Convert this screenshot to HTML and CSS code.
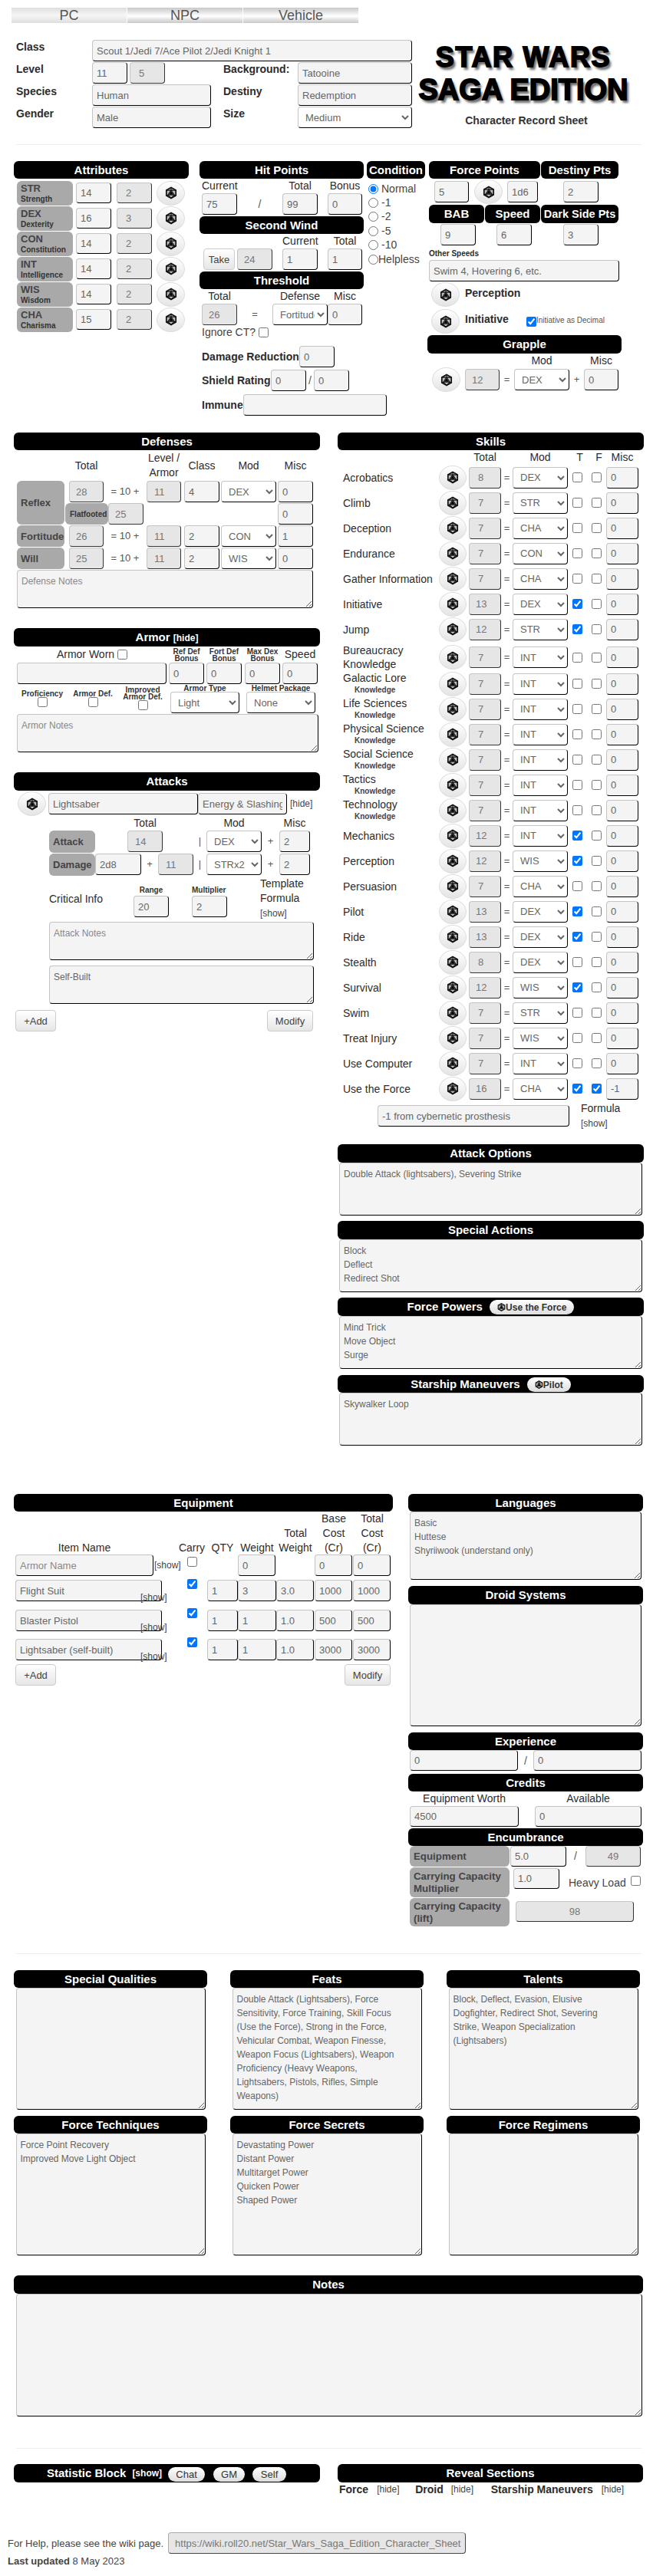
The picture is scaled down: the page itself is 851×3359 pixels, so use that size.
FILE: index.html
```html
<!DOCTYPE html>
<html lang="en">
<head>
<meta charset="utf-8">
<title>Star Wars Saga Edition Character Sheet</title>
<link rel="stylesheet" href="styles.css">
</head>
<body>
<svg class="defs" aria-hidden="true"><symbol id="d20" viewBox="0 0 16 16"><path d="M8 1 14.2 4.4V11.6L8 15 1.8 11.6V4.4Z" fill="#bbb" stroke="#111" stroke-width="1.7"/><path d="M8 1.5V4.5L3.8 10.8 8 15 12.2 10.8 8 4.5M2 4.6 8 4.5 14 4.6M2 11.5 3.8 10.8H12.2L14 11.5" fill="none" stroke="#111" stroke-width="1.1"/><path d="M8 5.6 11 10.2H5Z" fill="#000"/></symbol></svg>

<div class="tabs"><div class="tab on">PC</div><div class="tab">NPC</div><div class="tab">Vehicle</div></div>

<div class="head">
  <div class="idgrid">
    <b class="lb">Class</b><input class="f span4" value="Scout 1/Jedi 7/Ace Pilot 2/Jedi Knight 1">
    <b class="lb">Level</b><div class="lvl"><input class="f" value="11"><input class="f d d1" value="5" disabled></div><span></span><b class="lb">Background:</b><input class="f" value="Tatooine">
    <b class="lb">Species</b><input class="f" value="Human"><span></span><b class="lb">Destiny</b><input class="f" value="Redemption">
    <b class="lb">Gender</b><input class="f" value="Male"><span></span><b class="lb">Size</b><select class="s"><option>Medium</option></select>
  </div>
  <div class="logo"><div class="l1">STAR WARS</div><div class="l2">SAGA EDITION</div><b class="l3">Character Record Sheet</b></div>
</div>
<div class="rule r1"></div>

<div class="main1">
  <section class="attrs">
    <h2 class="hd">Attributes</h2>
    <div class="at"><div class="cell"><b>STR</b><small>Strength</small></div><input class="f h27" value="14"><input class="f h27 d d1" value="2" disabled><button class="roll"><svg><use href="#d20"/></svg></button></div>
    <div class="at"><div class="cell"><b>DEX</b><small>Dexterity</small></div><input class="f h27" value="16"><input class="f h27 d d1" value="3" disabled><button class="roll"><svg><use href="#d20"/></svg></button></div>
    <div class="at"><div class="cell"><b>CON</b><small>Constitution</small></div><input class="f h27" value="14"><input class="f h27 d d1" value="2" disabled><button class="roll"><svg><use href="#d20"/></svg></button></div>
    <div class="at"><div class="cell"><b>INT</b><small>Intelligence</small></div><input class="f h27" value="14"><input class="f h27 d d1" value="2" disabled><button class="roll"><svg><use href="#d20"/></svg></button></div>
    <div class="at"><div class="cell"><b>WIS</b><small>Wisdom</small></div><input class="f h27" value="14"><input class="f h27 d d1" value="2" disabled><button class="roll"><svg><use href="#d20"/></svg></button></div>
    <div class="at"><div class="cell"><b>CHA</b><small>Charisma</small></div><input class="f h27" value="15"><input class="f h27 d d1" value="2" disabled><button class="roll"><svg><use href="#d20"/></svg></button></div>
  </section>

  <section class="hp">
    <h2 class="hd">Hit Points</h2>
    <div class="hg cap"><span class="left">Current</span><span></span><span>Total</span><span></span><span>Bonus</span></div>
    <div class="hg"><input class="f" value="75"><i class="sl">/</i><input class="f" value="99"><span></span><input class="f" value="0"></div>
    <h2 class="hd gap2">Second Wind</h2>
    <div class="hg cap"><span></span><span></span><span>Current</span><span></span><span>Total</span></div>
    <div class="sw"><button class="btn take">Take</button><input class="f d" value="24" disabled><input class="f" value="1"><input class="f" value="1"></div>
    <h2 class="hd gap2">Threshold</h2>
    <div class="th cap"><span>Total</span><span></span><span>Defense</span><span>Misc</span></div>
    <div class="th"><input class="f d" value="26" disabled><span class="eq">=</span><select class="s"><option>Fortitude</option></select><input class="f" value="0"></div>
    <div class="ign">Ignore CT? <input type="checkbox"></div>
    <div class="pr dr"><b>Damage Reduction</b><input class="f w46" value="0"></div>
    <div class="pr shr"><b>Shield Rating</b><input class="f w46" value="0"><i class="sl2">/</i><input class="f w46" value="0"></div>
    <div class="pr imm"><b>Immune</b><input class="f w187"></div>
  </section>

  <section class="cond">
    <h2 class="hd">Condition</h2>
    <div class="radios">
      <label><input type="radio" name="c" checked>Normal</label>
      <label><input type="radio" name="c">-1</label>
      <label><input type="radio" name="c">-2</label>
      <label><input type="radio" name="c">-5</label>
      <label><input type="radio" name="c">-10</label>
      <label class="tight"><input type="radio" name="c">Helpless</label>
    </div>
  </section>

  <section class="rt">
    <div class="fp"><h2 class="hd">Force Points</h2><h2 class="hd">Destiny Pts</h2></div>
    <div class="fr"><input class="f" value="5"><button class="roll"><svg><use href="#d20"/></svg></button><input class="f" value="1d6"><input class="f" value="2"></div>
    <div class="bb"><h2 class="hd h24">BAB</h2><h2 class="hd h24">Speed</h2><h2 class="hd h24 tiny">Dark Side Pts</h2></div>
    <div class="br"><input class="f" value="9"><input class="f" value="6"><input class="f" value="3"></div>
    <b class="oth">Other Speeds</b>
    <input class="f" value="Swim 4, Hovering 6, etc.">
    <div class="rl"><button class="roll"><svg><use href="#d20"/></svg></button><b>Perception</b></div>
    <div class="rl second"><button class="roll"><svg><use href="#d20"/></svg></button><b>Initiative</b><input class="dec" type="checkbox" checked><span class="sm">Initiative as Decimal</span></div>
    <h2 class="hd h24 grap">Grapple</h2>
    <div class="gr cap"><span></span><span></span><span></span><span>Mod</span><span></span><span>Misc</span></div>
    <div class="gr row"><button class="roll"><svg><use href="#d20"/></svg></button><input class="f d" value="12" disabled><span class="eq">=</span><select class="s"><option>DEX</option></select><span class="eq">+</span><input class="f" value="0"></div>
  </section>
</div>

<div class="main2">
  <div class="col">
    <h2 class="hd">Defenses</h2>
    <div class="dg dcap"><span></span><span>Total</span><span></span><span>Level /<br>Armor</span><span class="end">Class</span><span class="end2">Mod</span><span class="end3">Misc</span></div>
    <div class="dg">
      <div class="cell big span2r"><b>Reflex</b></div><input class="f d" value="28" disabled><span class="eq">= 10 +</span><input class="f d d2" value="11" disabled><input class="f w46 je" value="4"><select class="s w72 je"><option>DEX</option></select><input class="f w46 je" value="0">
      <div class="ff"><b class="cell flat">Flatfooted</b><input class="f d w46" value="25" disabled></div><input class="f w46 je c7" value="0">
      <div class="cell big"><b>Fortitude</b></div><input class="f d" value="26" disabled><span class="eq">= 10 +</span><input class="f d d2" value="11" disabled><input class="f w46 je" value="2"><select class="s w72 je"><option>CON</option></select><input class="f w46 je" value="1">
      <div class="cell big"><b>Will</b></div><input class="f d" value="25" disabled><span class="eq">= 10 +</span><input class="f d d2" value="11" disabled><input class="f w46 je" value="2"><select class="s w72 je"><option>WIS</option></select><input class="f w46 je" value="0">
    </div>
    <textarea class="t defn" placeholder="Defense Notes"></textarea>

    <h2 class="hd h24 armor">Armor <span class="hl">[hide]</span></h2>
    <div class="ac acap"><span class="worn">Armor Worn <input type="checkbox"></span><b class="sml">Ref Def<br>Bonus</b><b class="sml">Fort Def<br>Bonus</b><b class="sml">Max Dex<br>Bonus</b><span class="speed">Speed</span></div>
    <div class="ac"><input class="f"><input class="f" value="0"><input class="f" value="0"><input class="f" value="0"><input class="f" value="0"></div>
    <div class="ar2">
      <div class="ck pt8"><b class="sml">Proficiency</b><input type="checkbox"></div>
      <div class="ck pt8"><b class="sml">Armor Def.</b><input type="checkbox"></div>
      <div class="ck pt3"><b class="sml">Improved<br>Armor Def.</b><input type="checkbox"></div>
      <div class="ck pt1"><b class="sml">Armor Type</b><select class="s w90"><option>Light</option></select></div>
      <div class="ck pt1"><b class="sml">Helmet Package</b><select class="s w90"><option>None</option></select></div>
    </div>
    <textarea class="t armn" placeholder="Armor Notes"></textarea>

    <h2 class="hd h24 armor">Attacks</h2>
    <div class="a1"><button class="roll"><svg><use href="#d20"/></svg></button><input class="f w195" value="Lightsaber"><input class="f w116" value="Energy &amp; Slashing"><span class="hide">[hide]</span></div>
    <div class="ag cap"><span></span><span></span><span>Total</span><span></span><span></span><span>Mod</span><span></span><span>Misc</span></div>
    <div class="ag r"><div class="cell big"><b>Attack</b></div><span></span><input class="f d d3" value="14" disabled><span></span><span class="eq bar">|</span><select class="s"><option>DEX</option></select><span class="eq">+</span><input class="f" value="2"></div>
    <div class="dm r"><div class="cell big"><b>Damage</b></div><input class="f" value="2d8"><span class="eq">+</span><input class="f d d3" value="11" disabled><span class="eq bar">|</span><select class="s"><option>STRx2</option></select><span class="eq">+</span><input class="f" value="2"></div>
    <div class="crit">
      <span class="ci">Critical Info</span>
      <div class="cf"><b class="sml">Range</b><input class="f w46" value="20"></div>
      <div class="cf lft"><b class="sml">Multiplier</b><input class="f w46" value="2"></div>
      <div class="tf">Template<br>Formula<br><span class="hide">[show]</span></div>
    </div>
    <textarea class="t atkn" placeholder="Attack Notes"></textarea>
    <textarea class="t atkn g7">Self-Built</textarea>
    <div class="bt atb"><button class="btn add">+Add</button><button class="btn mod">Modify</button></div>
  </div>

  <div class="col">
    <h2 class="hd">Skills</h2>
    <div class="sk skcap"><span></span><span></span><span>Total</span><span></span><span>Mod</span><span>T</span><span>F</span><span>Misc</span></div>
    <div class="sk"><span class="nm">Acrobatics</span><button class="roll"><svg><use href="#d20"/></svg></button><input class="f d d1" value="8" disabled><span class="eq">=</span><select class="s"><option>DEX</option></select><input type="checkbox"><input type="checkbox"><input class="f" value="0"></div>
    <div class="sk"><span class="nm">Climb</span><button class="roll"><svg><use href="#d20"/></svg></button><input class="f d d1" value="7" disabled><span class="eq">=</span><select class="s"><option>STR</option></select><input type="checkbox"><input type="checkbox"><input class="f" value="0"></div>
    <div class="sk"><span class="nm">Deception</span><button class="roll"><svg><use href="#d20"/></svg></button><input class="f d d1" value="7" disabled><span class="eq">=</span><select class="s"><option>CHA</option></select><input type="checkbox"><input type="checkbox"><input class="f" value="0"></div>
    <div class="sk"><span class="nm">Endurance</span><button class="roll"><svg><use href="#d20"/></svg></button><input class="f d d1" value="7" disabled><span class="eq">=</span><select class="s"><option>CON</option></select><input type="checkbox"><input type="checkbox"><input class="f" value="0"></div>
    <div class="sk"><span class="nm">Gather Information</span><button class="roll"><svg><use href="#d20"/></svg></button><input class="f d d1" value="7" disabled><span class="eq">=</span><select class="s"><option>CHA</option></select><input type="checkbox"><input type="checkbox"><input class="f" value="0"></div>
    <div class="sk"><span class="nm">Initiative</span><button class="roll"><svg><use href="#d20"/></svg></button><input class="f d" value="13" disabled><span class="eq">=</span><select class="s"><option>DEX</option></select><input type="checkbox" checked><input type="checkbox"><input class="f" value="0"></div>
    <div class="sk"><span class="nm">Jump</span><button class="roll"><svg><use href="#d20"/></svg></button><input class="f d" value="12" disabled><span class="eq">=</span><select class="s"><option>STR</option></select><input type="checkbox" checked><input type="checkbox"><input class="f" value="0"></div>
    <div class="sk tall"><span class="nm">Bureaucracy<br>Knowledge</span><button class="roll"><svg><use href="#d20"/></svg></button><input class="f d d1" value="7" disabled><span class="eq">=</span><select class="s"><option>INT</option></select><input type="checkbox"><input type="checkbox"><input class="f" value="0"></div>
    <div class="sk"><span class="nm">Galactic Lore<small>Knowledge</small></span><button class="roll"><svg><use href="#d20"/></svg></button><input class="f d d1" value="7" disabled><span class="eq">=</span><select class="s"><option>INT</option></select><input type="checkbox"><input type="checkbox"><input class="f" value="0"></div>
    <div class="sk"><span class="nm">Life Sciences<small>Knowledge</small></span><button class="roll"><svg><use href="#d20"/></svg></button><input class="f d d1" value="7" disabled><span class="eq">=</span><select class="s"><option>INT</option></select><input type="checkbox"><input type="checkbox"><input class="f" value="0"></div>
    <div class="sk"><span class="nm">Physical Science<small>Knowledge</small></span><button class="roll"><svg><use href="#d20"/></svg></button><input class="f d d1" value="7" disabled><span class="eq">=</span><select class="s"><option>INT</option></select><input type="checkbox"><input type="checkbox"><input class="f" value="0"></div>
    <div class="sk"><span class="nm">Social Science<small>Knowledge</small></span><button class="roll"><svg><use href="#d20"/></svg></button><input class="f d d1" value="7" disabled><span class="eq">=</span><select class="s"><option>INT</option></select><input type="checkbox"><input type="checkbox"><input class="f" value="0"></div>
    <div class="sk"><span class="nm">Tactics<small>Knowledge</small></span><button class="roll"><svg><use href="#d20"/></svg></button><input class="f d d1" value="7" disabled><span class="eq">=</span><select class="s"><option>INT</option></select><input type="checkbox"><input type="checkbox"><input class="f" value="0"></div>
    <div class="sk"><span class="nm">Technology<small>Knowledge</small></span><button class="roll"><svg><use href="#d20"/></svg></button><input class="f d d1" value="7" disabled><span class="eq">=</span><select class="s"><option>INT</option></select><input type="checkbox"><input type="checkbox"><input class="f" value="0"></div>
    <div class="sk"><span class="nm">Mechanics</span><button class="roll"><svg><use href="#d20"/></svg></button><input class="f d" value="12" disabled><span class="eq">=</span><select class="s"><option>INT</option></select><input type="checkbox" checked><input type="checkbox"><input class="f" value="0"></div>
    <div class="sk"><span class="nm">Perception</span><button class="roll"><svg><use href="#d20"/></svg></button><input class="f d" value="12" disabled><span class="eq">=</span><select class="s"><option>WIS</option></select><input type="checkbox" checked><input type="checkbox"><input class="f" value="0"></div>
    <div class="sk"><span class="nm">Persuasion</span><button class="roll"><svg><use href="#d20"/></svg></button><input class="f d d1" value="7" disabled><span class="eq">=</span><select class="s"><option>CHA</option></select><input type="checkbox"><input type="checkbox"><input class="f" value="0"></div>
    <div class="sk"><span class="nm">Pilot</span><button class="roll"><svg><use href="#d20"/></svg></button><input class="f d" value="13" disabled><span class="eq">=</span><select class="s"><option>DEX</option></select><input type="checkbox" checked><input type="checkbox"><input class="f" value="0"></div>
    <div class="sk"><span class="nm">Ride</span><button class="roll"><svg><use href="#d20"/></svg></button><input class="f d" value="13" disabled><span class="eq">=</span><select class="s"><option>DEX</option></select><input type="checkbox" checked><input type="checkbox"><input class="f" value="0"></div>
    <div class="sk"><span class="nm">Stealth</span><button class="roll"><svg><use href="#d20"/></svg></button><input class="f d d1" value="8" disabled><span class="eq">=</span><select class="s"><option>DEX</option></select><input type="checkbox"><input type="checkbox"><input class="f" value="0"></div>
    <div class="sk"><span class="nm">Survival</span><button class="roll"><svg><use href="#d20"/></svg></button><input class="f d" value="12" disabled><span class="eq">=</span><select class="s"><option>WIS</option></select><input type="checkbox" checked><input type="checkbox"><input class="f" value="0"></div>
    <div class="sk"><span class="nm">Swim</span><button class="roll"><svg><use href="#d20"/></svg></button><input class="f d d1" value="7" disabled><span class="eq">=</span><select class="s"><option>STR</option></select><input type="checkbox"><input type="checkbox"><input class="f" value="0"></div>
    <div class="sk"><span class="nm">Treat Injury</span><button class="roll"><svg><use href="#d20"/></svg></button><input class="f d d1" value="7" disabled><span class="eq">=</span><select class="s"><option>WIS</option></select><input type="checkbox"><input type="checkbox"><input class="f" value="0"></div>
    <div class="sk"><span class="nm">Use Computer</span><button class="roll"><svg><use href="#d20"/></svg></button><input class="f d d1" value="7" disabled><span class="eq">=</span><select class="s"><option>INT</option></select><input type="checkbox"><input type="checkbox"><input class="f" value="0"></div>
    <div class="sk"><span class="nm">Use the Force</span><button class="roll"><svg><use href="#d20"/></svg></button><input class="f d" value="16" disabled><span class="eq">=</span><select class="s"><option>CHA</option></select><input type="checkbox" checked><input type="checkbox" checked><input class="f" value="-1"></div>
    <div class="sknote"><input class="f w250" value="-1 from cybernetic prosthesis"><div class="tf">Formula<br><span class="hide">[show]</span></div></div>

    <h2 class="hd h24 aop">Attack Options</h2>
    <textarea class="t rta">Double Attack (lightsabers), Severing Strike</textarea>
    <h2 class="hd h24 g7">Special Actions</h2>
    <textarea class="t rta">Block
Deflect
Redirect Shot</textarea>
    <h2 class="hd h24 g7">Force Powers <button class="pill"><svg><use href="#d20"/></svg>Use the Force</button></h2>
    <textarea class="t rta">Mind Trick
Move Object
Surge</textarea>
    <h2 class="hd g8">Starship Maneuvers <button class="pill"><svg><use href="#d20"/></svg>Pilot</button></h2>
    <textarea class="t rta">Skywalker Loop</textarea>
  </div>
</div>

<div class="main3">
  <section class="eqp">
    <h2 class="hd">Equipment</h2>
    <div class="eg ecap"><span class="item">Item Name</span><span>Carry</span><span>QTY</span><span>Weight</span><span>Total<br>Weight</span><span>Base<br>Cost<br>(Cr)</span><span>Total<br>Cost<br>(Cr)</span></div>
    <div class="eg e33"><div class="nmc"><input class="f w180" placeholder="Armor Name"><span class="hide sh0">[show]</span></div><input class="m3" type="checkbox"><span></span><input class="f w49" value="0"><span></span><input class="f w49" value="0"><input class="f w49" value="0"></div>
    <div class="eg e39"><div class="nmc"><input class="f w191" value="Flight Suit"><span class="hide over">[show]</span></div><input class="mn1" type="checkbox" checked><input class="f" value="1"><input class="f" value="3"><input class="f w49" value="3.0"><input class="f w49" value="1000"><input class="f w49" value="1000"></div>
    <div class="eg e38"><div class="nmc"><input class="f w191" value="Blaster Pistol"><span class="hide over">[show]</span></div><input class="mn2" type="checkbox" checked><input class="f" value="1"><input class="f" value="1"><input class="f w49" value="1.0"><input class="f w49" value="500"><input class="f w49" value="500"></div>
    <div class="eg e33"><div class="nmc"><input class="f w191" value="Lightsaber (self-built)"><span class="hide over">[show]</span></div><input class="mn2" type="checkbox" checked><input class="f" value="1"><input class="f" value="1"><input class="f w49" value="1.0"><input class="f w49" value="3000"><input class="f w49" value="3000"></div>
    <div class="bt eqb"><button class="btn add">+Add</button><button class="btn mod">Modify</button></div>
  </section>
  <section class="lang">
    <h2 class="hd">Languages</h2>
    <textarea class="t lt">Basic
Huttese
Shyriiwook (understand only)</textarea>
    <h2 class="hd h24 g8">Droid Systems</h2>
    <textarea class="t dt"></textarea>
    <h2 class="hd g8">Experience</h2>
    <div class="xp"><input class="f h27" value="0"><i class="sl">/</i><input class="f h27" value="0"></div>
    <h2 class="hd g3">Credits</h2>
    <div class="cr cap"><span>Equipment Worth</span><span></span><span>Available</span></div>
    <div class="cr"><input class="f h27" value="4500"><span></span><input class="f h27" value="0"></div>
    <h2 class="hd g2">Encumbrance</h2>
    <div class="en e1"><b class="cell gl">Equipment</b><input class="f h27 w73" value="5.0"><i class="sl w24">/</i><input class="f h27 d w72 tc" value="49" disabled></div>
    <div class="en e2"><b class="cell gl">Carrying Capacity<br>Multiplier</b><input class="f h27 w60 m5" value="1.0"><span class="hv">Heavy Load</span><input type="checkbox"></div>
    <div class="en e3"><b class="cell gl">Carrying Capacity<br>(lift)</b><input class="f h27 d w154 tc" value="98" disabled></div>
  </section>
</div>
<div class="rule r2"></div>

<div class="tri">
  <section><h2 class="hd">Special Qualities</h2><textarea class="t tb"></textarea></section>
  <section><h2 class="hd">Feats</h2><textarea class="t tb">Double Attack (Lightsabers), Force Sensitivity, Force Training, Skill Focus (Use the Force), Strong in the Force, Vehicular Combat, Weapon Finesse, Weapon Focus (Lightsabers), Weapon Proficiency (Heavy Weapons, Lightsabers, Pistols, Rifles, Simple Weapons)</textarea></section>
  <section><h2 class="hd">Talents</h2><textarea class="t tb">Block, Deflect, Evasion, Elusive Dogfighter, Redirect Shot, Severing Strike, Weapon Specialization (Lightsabers)</textarea></section>
  <section><h2 class="hd">Force Techniques</h2><textarea class="t tb">Force Point Recovery
Improved Move Light Object</textarea></section>
  <section><h2 class="hd">Force Secrets</h2><textarea class="t tb">Devastating Power
Distant Power
Multitarget Power
Quicken Power
Shaped Power</textarea></section>
  <section><h2 class="hd">Force Regimens</h2><textarea class="t tb"></textarea></section>
</div>

<section class="notes"><h2 class="hd h24">Notes</h2><textarea class="t nt"></textarea></section>
<div class="rule r3"></div>

<div class="foot">
  <section class="stat"><h2 class="hd h24 sthd"><span>Statistic Block</span><span class="shw">[show]</span><button class="pill p1">Chat</button><button class="pill p2">GM</button><button class="pill p3">Self</button></h2></section>
  <section class="rev"><h2 class="hd h24">Reveal Sections</h2>
    <div class="rv"><b>Force</b><span class="hide a">[hide]</span><b>Droid</b><span class="hide b">[hide]</span><b>Starship Maneuvers</b><span class="hide c">[hide]</span></div>
  </section>
</div>

<div class="help"><span>For Help, please see the wiki page.</span><input class="f d url" value="https://wiki.roll20.net/Star_Wars_Saga_Edition_Character_Sheet" disabled></div>
<div class="upd"><b>Last updated</b> 8 May 2023</div>
</body>
</html>
```
FILE: styles.css
```css
* { box-sizing: border-box; }
body { margin: 0; width: 851px; height: 3359px; background: #fff; color: #2c2c2c; font: 14px/19px "Liberation Sans", Arial, sans-serif; }
.defs { display: none; }
h2, small { margin: 0; }
i { font-style: normal; }

.f { display: block; width: 100%; height: 28px; padding: 0 5px; margin: 0; background: #f4f4f4; color: #666; font: 13px "Liberation Sans", Arial, sans-serif; border: 1px solid; border-color: #c4c4c4 #000 #000 #c4c4c4; border-radius: 4px; outline: 0; }
.f.d { background: #e6e6e6; padding-left: 8px; color: #777; border-color: #c4c4c4 #333 #333 #c4c4c4; }
.f.d1 { padding-left: 11px; }
.f.d2, .f.d3 { padding-left: 9px; }
.f.tc { text-align: center; padding: 0; }
.f::placeholder, .t::placeholder { color: #888; opacity: 1; }
.s { display: block; width: 100%; height: 28px; padding: 0 0 0 5px; margin: 0; background: #fff; color: #666; font: 13px "Liberation Sans", Arial, sans-serif; border: 1px solid; border-color: #c4c4c4 #000 #000 #c4c4c4; border-radius: 4px; }
.t { display: block; padding: 5px; margin: 0; background: #f4f4f4; color: #666; font: 12px/18px "Liberation Sans", Arial, sans-serif; border: 1px solid; border-color: #c4c4c4 #000 #000 #c4c4c4; border-radius: 4px; outline: 0; }
input[type=checkbox], input[type=radio] { margin: 0; width: 13px; height: 13px; }
.h27 { height: 27px; }
.w46 { width: 46px; flex: none; } .w49 { width: 49px; } .w60 { width: 60px; } .w72 { width: 72px; } .w73 { width: 73px; }
.w90 { width: 90px; } .w116 { width: 116px; } .w154 { width: 154px; } .w180 { width: 180px; } .w187 { width: 187px; flex: none; }
.w191 { width: 191px; } .w195 { width: 195px; } .w250 { width: 250px; }

.hd { height: 23px; background: #000; color: #fff; font: bold 15px/23px "Liberation Sans", Arial, sans-serif; text-align: center; border-radius: 6px; }
.h24 { height: 24px; line-height: 24px; }
.gap2, .g2 { margin-top: 2px; } .g3 { margin-top: 3px; } .g7 { margin-top: 7px; } .g8 { margin-top: 8px; }
.cell { display: flex; flex-direction: column; justify-content: center; background: #a9a9aa; color: #444; border-radius: 6px; padding-left: 5px; font-weight: bold; }
.eq { text-align: center; color: #555; font-size: 13px; line-height: 28px; }
.roll { display: flex; align-items: center; justify-content: center; width: 37px; height: 32px; padding: 0; margin: 0; background: linear-gradient(#fff, #e4e4e4); border: 1px solid #ddd; border-radius: 50%; }
.roll svg { width: 16px; height: 17px; }
.btn { height: 28px; padding: 0; background: linear-gradient(#fff, #e6e6e6); color: #444; font: 13px "Liberation Sans", Arial, sans-serif; border: 1px solid #ccc; border-radius: 4px; }
.sml { font-size: 10px; line-height: 9px; font-weight: bold; color: #333; text-align: center; }
.hide { font-size: 12px; color: #444; }
.pill { display: inline-flex; align-items: center; vertical-align: top; height: 19px; padding: 0 10px; margin: 3px 0 0 5px; background: linear-gradient(#fff, #ddd); color: #333; font: bold 12px "Liberation Sans", Arial, sans-serif; border: 0; border-radius: 10px; }
.pill svg { width: 11px; height: 11px; }

.tabs { display: flex; margin: 10px 0 0 15px; height: 20px; }
.tab { width: 151px; background: linear-gradient(#c8c8c8, #fff 55%, #c8c8c8); color: #555; font-size: 18px; line-height: 20px; text-align: center; border-right: 1px solid #fff; }
.tab.on { background: linear-gradient(#dedede, #f6f6f6 50%, #dedede); }

.head { display: flex; margin: 22px 0 0 21px; height: 115px; }
.idgrid { display: grid; grid-template-columns: 99px 155px 16px 97px 149px; grid-template-rows: 29px 29px 29px 28px; width: 516px; align-items: start; }
.idgrid .lb { line-height: 18px; }
.span4 { grid-column: 2 / 6; }
.lvl { display: flex; gap: 3px; width: 95px; }
.lvl .f { width: 46px; }
.logo { display: flex; flex-direction: column; align-items: center; width: 276px; margin: 6px 0 0 7px; font-weight: bold; color: #000; }
.l1 { font-size: 36px; line-height: 34px; letter-spacing: 1.7px; -webkit-text-stroke: 1.8px #000; text-shadow: 3px 4px 3px #666; }
.l2 { font-size: 38px; line-height: 36px; margin-top: 7px; white-space: nowrap; -webkit-text-stroke: 1.8px #000; text-shadow: 3px 4px 3px #666; }
.l3 { margin: 13px 0 0 8px; color: #333; line-height: 18px; }
.rule { height: 1px; background: #eee; }
.r1 { margin: 21px 15px 0 21px; }
.main1 { display: flex; margin-top: 21px; padding-left: 18px; height: 354px; }

.attrs { width: 228px; }
.at { display: grid; grid-template-columns: 73px 46px 46px 37px; column-gap: 4px; align-items: center; height: 33px; margin: 0 0 0 4px; }
.hd + .at { margin-top: 2px; }
.at .f:nth-of-type(2) { margin-left: 3px; }
.at .roll { margin-left: 5px; }
.at .cell { height: 32px; justify-content: flex-start; }
.at .cell b { font-size: 13px; line-height: 17px; margin-top: 1px; }
.at .cell small { font-size: 10px; line-height: 12px; color: #333; }

.hp { width: 214px; margin-left: 14px; }
.hg { display: grid; grid-template-columns: 46px 59px 46px 13px 45px; padding-left: 3px; }
.cap { text-align: center; height: 19px; }
.left { text-align: left; }
.sl { text-align: center; line-height: 28px; color: #555; }
.sw { display: grid; grid-template-columns: 41px 46px 46px 45px; column-gap: 3px; padding-left: 5px; }
.sw > :nth-child(3) { margin-left: 10px; width: 46px; }
.sw > :nth-child(4) { margin-left: 20px; }
.th { display: grid; grid-template-columns: 46px 46px 72px 45px; padding-left: 3px; }
.ign { padding: 0 0 0 3px; height: 19px; line-height: 17px; display: flex; align-items: center; gap: 4px; color: #444; }
.pr { display: flex; align-items: center; height: 28px; padding-left: 3px; }
.dr { margin-top: 8px; } .dr b { width: 127px; }
.shr { margin-top: 3px; } .shr b { width: 90px; }
.sl2 { width: 10px; text-align: center; color: #555; }
.imm { margin-top: 4px; } .imm b { width: 54px; }

.cond { width: 76px; margin-left: 4px; }
.radios { padding: 4px 0 0 2px; }
.radios label { display: flex; align-items: center; height: 18.4px; color: #444; white-space: nowrap; }
.radios input { margin-right: 4px; flex: none; }
.radios .tight input { margin-right: 0; }

.rt { width: 248px; margin-left: 5px; }
.fp { display: flex; gap: 1px; width: 247px; }
.fp .hd:first-child { width: 145px; } .fp .hd:last-child { width: 101px; }
.fr { display: grid; grid-template-columns: 52px 43px 73px 46px; align-items: center; height: 32px; margin-top: 1px; padding-left: 7px; }
.fr .f:nth-child(3) { width: 40px; }
.fr .f:first-child { width: 45px; }
.bb { display: flex; gap: 1px; margin-top: 1px; }
.bb .hd { width: 72px; } .bb .hd.tiny { width: 101px; font-size: 14.5px; white-space: nowrap; }
.br { display: grid; grid-template-columns: 73px 87px 46px; padding-left: 15px; margin-top: 1px; }
.br .f { width: 46px; }
.oth { display: block; font-size: 10px; height: 19px; line-height: 21px; }
.rl { display: flex; align-items: flex-start; height: 32px; margin-top: 1px; padding-left: 3px; }
.rl b { margin-left: 7px; line-height: 28px; }
.rl.second { margin-top: 3px; }
.rl .sm { font-size: 10px; line-height: 30px; color: #555; white-space: nowrap; }
.rl b + .dec { margin: 10px 0 0 26px; }
.rl.second b { width: 54px; line-height: 27px; }
.grap { width: 253px; margin: 2px 0 0 -2px; }
.gr { display: grid; grid-template-columns: 37px 6px 45px 19px 72px 19px 45px; padding-left: 4px; align-items: center; }
.gr.cap { height: 18px; }
.gr.cap > :nth-child(1) { grid-column: 1 / 3; }
.gr.row .f.d { grid-column: 3; }
.gr.row { height: 32px; }

.main2 { display: flex; gap: 23px; padding-left: 18px; }
.col { width: 399px; }
.dg { display: grid; grid-template-columns: 68px 45px 56px 45px 50px 74px 48px; margin-left: 4px; grid-auto-rows: 29px; width: 386px; align-items: start; }
.dcap { grid-auto-rows: 40px; align-items: center; text-align: center; }
.dcap > :nth-child(4) { white-space: nowrap; }
.dcap .end { padding-left: 4px; } .dcap .end2 { padding-left: 2px; } .dcap .end3 { padding-left: 2px; }
.big { width: 60px; height: 28px; white-space: nowrap; }
.big b { font-size: 13px; }
.dg .big { width: 62px; }
.span2r { grid-row: span 2; height: 57px; }
.je { justify-self: end; }
.ff { grid-column: 2 / 5; display: flex; margin-left: -5px; }
.flat { width: 56px; height: 28px; padding: 0 0 0 6px; font-size: 10px; color: #333; white-space: nowrap; }
.c7 { grid-column: 7; }
.defn { width: 386px; height: 50px; margin: 0 0 0 4px; }
.armor { margin-top: 26px; }
.hl { font-size: 12px; }
.ac { display: grid; grid-template-columns: 198px 49px 50px 49px 46px; margin-left: 4px; }
.ac .f { width: 46px; } .ac .f:first-child { width: 195px; }
.acap { height: 21px; text-align: center; align-items: center; }
.worn { display: inline-flex; align-items: center; justify-content: center; gap: 4px; width: 196px; }
.acap .sml { margin-left: -2px; width: 50px; padding-top: 1px; }
.ar2 { display: grid; grid-template-columns: 66px 66px 64px 98px 100px; margin-left: 4px; height: 40px; }
.ck { display: flex; flex-direction: column; align-items: center; }
.pt8 { padding-top: 8px; } .pt3 { padding-top: 3px; } .pt1 { padding-top: 1px; }
.armn { width: 393px; height: 50px; margin-left: 4px; margin-top: -1px; }
.a1 { display: flex; height: 32px; margin: 1px 0 0 5px; align-items: center; }
.a1 .roll { margin-right: 3px; flex: none; }
.a1 .hide { margin-left: 4px; }
.ag { display: grid; grid-template-columns: 60px 42px 46px 40px 17px 72px 23px 40px; margin-left: 46px; }
.dm { display: grid; grid-template-columns: 60px 60px 22px 46px 17px 72px 23px 40px; margin-left: 46px; }
.r { height: 30px; }
.r .big { height: 29px; width: 60px; }
.crit { display: grid; grid-template-columns: 110px 76px 89px 70px; margin-left: 46px; height: 59px; }
.ci { align-self: center; margin-top: -1px; }
.cf { padding-top: 11px; }
.cf .sml { display: block; width: 46px; line-height: 14px; }
.cf.lft .sml { text-align: left; white-space: nowrap; }
.tf { line-height: 19px; }
.atkn { width: 345px; height: 50px; margin-left: 46px; }
.bt { display: flex; justify-content: space-between; margin-left: 2px; }
.add { width: 53px; } .mod { width: 60px; }
.atb { width: 388px; margin-top: 8px; }

.sk { display: grid; grid-template-columns: 125px 36px 3px 42px 15px 72px 6px 13px 12px 13px 6px 42px; height: 33px; margin-left: 7px; align-items: center; }
.sk > * { grid-row: 1; }
.sk > :nth-child(1) { grid-column: 1; }
.sk > :nth-child(2) { grid-column: 2; }
.sk > :nth-child(3) { grid-column: 4; }
.sk > :nth-child(4) { grid-column: 5; }
.sk > :nth-child(5) { grid-column: 6; }
.sk > :nth-child(6) { grid-column: 8; }
.sk > :nth-child(7) { grid-column: 10; }
.sk > :nth-child(8) { grid-column: 12; }
.sk .roll { width: 36px; }
.skcap { height: 19px; text-align: center; }
.skcap > :nth-child(6) { grid-column: 7 / 10; } .skcap > :nth-child(7) { grid-column: 10 / 12; }
.nm { line-height: 16px; white-space: nowrap; }
.nm small { display: block; padding-left: 15px; font-size: 10px; font-weight: bold; line-height: 16px; color: #444; }
.tall { height: 38px; padding-top: 2px; }
.tall .nm { line-height: 18px; }
.sknote { display: flex; height: 38px; padding: 5px 0 0 52px; }
.sknote .tf { margin: -5px 0 0 15px; }
.aop { margin-top: 18px; }
.rta { width: 395px; height: 69px; margin-left: 2px; }

.main3 { display: flex; margin-top: 63px; padding-left: 18px; }
.eqp { width: 494px; }
.eg { display: grid; grid-template-columns: 210px 40px 40px 50px 50px 50px 50px; margin-left: 2px; align-items: start; }
.ecap { height: 56px; align-items: end; text-align: center; padding-bottom: 1px; }
.item { width: 180px; }
.e33 { height: 33px; } .e39 { height: 39px; } .e38 { height: 38px; }
.nmc { position: relative; display: flex; align-items: center; white-space: nowrap; }
.sh0 { margin-left: 1px; }
.over { position: absolute; left: 163px; top: 14px; }
.eg input[type=checkbox] { justify-self: center; }
.eg .m3 { margin-top: 3px; } .eg .mn1 { margin-top: -1px; } .eg .mn2 { margin-top: -2px; }
.eqb { width: 489px; }
.lang { width: 306px; margin-left: 20px; }
.lt { width: 302px; height: 89px; margin-left: 2px; }
.dt { width: 302px; height: 159px; margin-left: 2px; }
.xp { display: grid; grid-template-columns: 141px 20px 141px; margin-left: 2px; }
.cr { display: grid; grid-template-columns: 142px 21px 139px; margin-left: 2px; }
.cr.cap { height: 19px; }
.en { display: flex; align-items: flex-start; margin-left: 2px; width: 302px; }
.gl { width: 130px; font-size: 13.3px; line-height: 16px; color: #444; flex: none; }
.e1 { height: 28px; } .e1 .gl { height: 27px; }
.e1 .f { margin-left: 1px; }
.w24 { width: 24px; text-align: center; line-height: 27px; }
.e2 { height: 40px; } .e2 .gl { height: 39px; }
.m5 { margin: 1px 0 0 5px; }
.hv { margin: 11px 0 0 12px; width: 81px; color: #444; }
.e2 input[type=checkbox] { margin-top: 11px; }
.e3 .gl { height: 37px; }
.e3 .f { margin: 4px 0 0 8px; }
.r2 { margin: 35px 15px 0 21px; }

.tri { display: grid; grid-template-columns: 252px 252px 252px; column-gap: 30px; margin: 21px 0 0 18px; row-gap: 8px; }
.tb { width: 247px; height: 159px; margin-left: 2.5px; padding-right: 25px; }
.notes { margin: 26px 0 0 18px; width: 820px; }
.nt { width: 816px; height: 160px; margin-left: 2.5px; }
.r3 { margin: 41px 15px 0 21px; }
.foot { display: flex; gap: 23px; margin: 20px 0 0 18px; }
.stat { width: 399px; }
.sthd { display: flex; align-items: flex-start; padding-left: 43px; }
.sthd .shw { font-size: 12px; margin-left: 8px; }
.sthd .pill { font-weight: normal; font-size: 13px; justify-content: center; padding: 0; margin-top: 4px; }
.sthd .p1 { width: 48px; margin-left: 8px; } .sthd .p2 { width: 41px; margin-left: 11px; } .sthd .p3 { width: 44px; margin-left: 10px; }
.rev { width: 398px; }
.rv { display: flex; padding-left: 2px; align-items: center; height: 19px; white-space: nowrap; }
.rv .a { margin: 0 0 0 11px; width: 50px; } .rv .b { margin: 0 0 0 10px; width: 52px; } .rv .c { margin-left: 11px; }
.help { display: flex; align-items: center; gap: 6px; margin: 46px 0 0 10px; font-size: 13px; color: #444; }
.help .url { width: 388px; border-color: #aaa #444 #444 #aaa; }
.upd { margin: 1px 0 0 10px; font-size: 13px; color: #444; line-height: 18px; }
```
